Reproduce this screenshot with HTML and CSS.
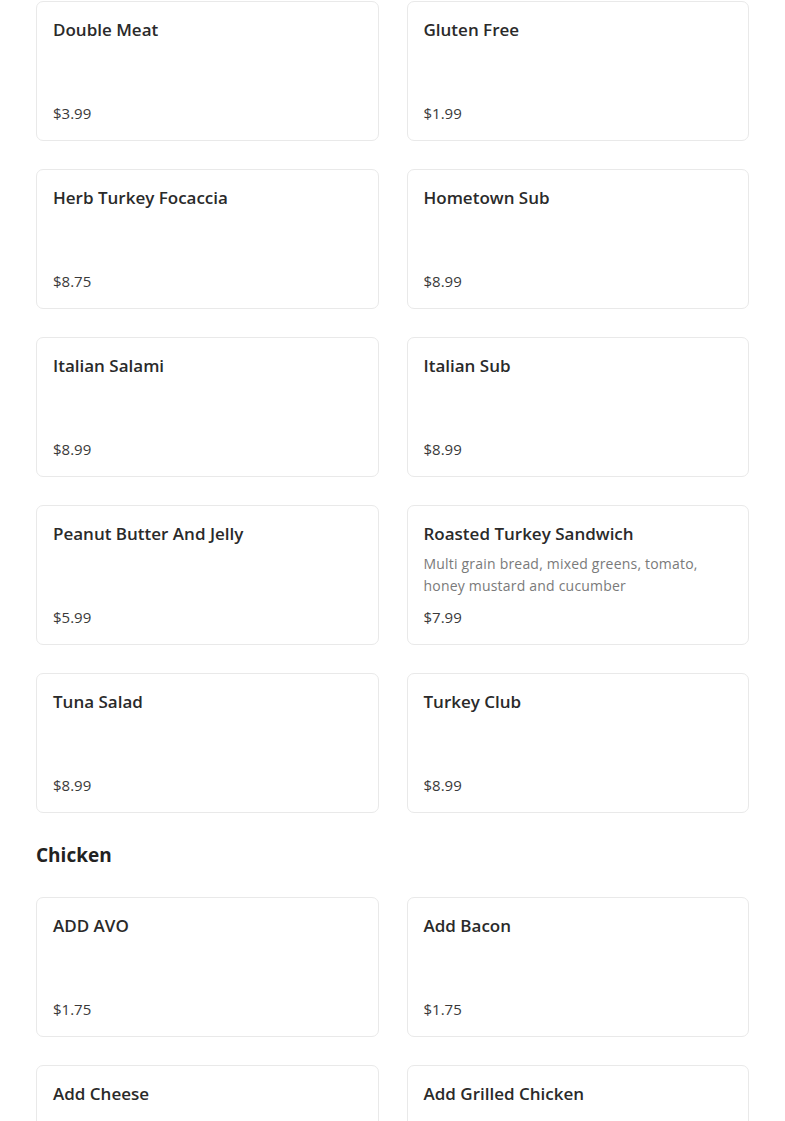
FILE: index.html
```html
<!DOCTYPE html>
<html>
<head>
<meta charset="utf-8">
<link rel="stylesheet" href="styles.css">
</head>
<body>
<main class="menu">
  <section class="section">
    <div class="grid">
      <div class="card"><div class="top"><h3 class="title">Double Meat</h3></div><div class="price">$3.99</div></div>
      <div class="card"><div class="top"><h3 class="title">Gluten Free</h3></div><div class="price">$1.99</div></div>
      <div class="card"><div class="top"><h3 class="title">Herb Turkey Focaccia</h3></div><div class="price">$8.75</div></div>
      <div class="card"><div class="top"><h3 class="title">Hometown Sub</h3></div><div class="price">$8.99</div></div>
      <div class="card"><div class="top"><h3 class="title">Italian Salami</h3></div><div class="price">$8.99</div></div>
      <div class="card"><div class="top"><h3 class="title">Italian Sub</h3></div><div class="price">$8.99</div></div>
      <div class="card"><div class="top"><h3 class="title">Peanut Butter And Jelly</h3></div><div class="price">$5.99</div></div>
      <div class="card"><div class="top"><h3 class="title">Roasted Turkey Sandwich</h3><p class="desc">Multi grain bread, mixed greens, tomato, honey mustard and cucumber</p></div><div class="price">$7.99</div></div>
      <div class="card"><div class="top"><h3 class="title">Tuna Salad</h3></div><div class="price">$8.99</div></div>
      <div class="card"><div class="top"><h3 class="title">Turkey Club</h3></div><div class="price">$8.99</div></div>
    </div>
  </section>
  <section class="section">
    <h2 class="heading">Chicken</h2>
    <div class="grid">
      <div class="card"><div class="top"><h3 class="title">ADD AVO</h3></div><div class="price">$1.75</div></div>
      <div class="card"><div class="top"><h3 class="title">Add Bacon</h3></div><div class="price">$1.75</div></div>
      <div class="card"><div class="top"><h3 class="title">Add Cheese</h3></div><div class="price">$1.75</div></div>
      <div class="card"><div class="top"><h3 class="title">Add Grilled Chicken</h3></div><div class="price">$3.99</div></div>
    </div>
  </section>
</main>
</body>
</html>
```
FILE: styles.css
```css
* { box-sizing: border-box; }
body {
  margin: 0;
  background: #fff;
  font-family: "Open Sans", "Noto Sans", sans-serif;
  color: #222;
}
.menu {
  padding: 1px 36px 0 36px;
  display: flex;
  flex-direction: column;
  gap: 28px;
}
.grid {
  display: grid;
  grid-template-columns: 1fr 1fr;
  gap: 28px;
}
.heading {
  margin: 0 0 28px 0;
  font-size: 19px;
  font-weight: 700;
  line-height: 28px;
  color: #222;
}
.card {
  min-height: 140px;
  border: 1px solid #e9e9e9;
  border-radius: 7px;
  padding: 16px;
  display: flex;
  flex-direction: column;
  justify-content: space-between;
  background: #fff;
}
.title {
  margin: 0;
  font-size: 17px;
  font-weight: 600;
  line-height: 24px;
  color: #2a2a2a;
}
.desc {
  margin: 7px 0 9px 0;
  font-size: 14px;
  line-height: 22px;
  color: #7a7a7a;
  font-weight: 400;
  letter-spacing: 0.2px;
}
.price {
  font-size: 15px;
  line-height: 22px;
  color: #3a3a3a;
  font-weight: 400;
}
```
